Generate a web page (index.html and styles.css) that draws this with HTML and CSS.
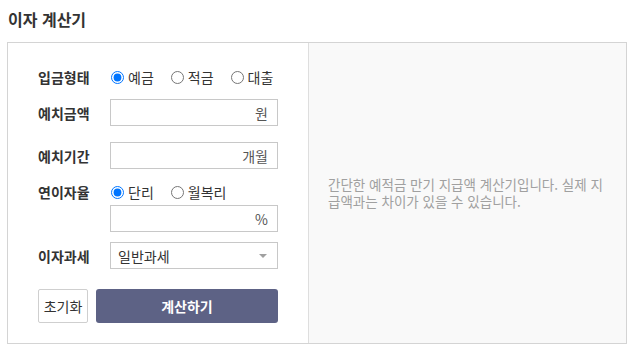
FILE: index.html
```html
<!DOCTYPE html>
<html lang="ko">
<head>
<meta charset="utf-8">
<title>이자 계산기</title>
<link rel="stylesheet" href="styles.css">
</head>
<body>
<div class="page">
  <h1 class="title">이자 계산기</h1>
  <div class="calc">
    <div class="form">
      <div class="row row-radio">
        <span class="label">입금형태</span>
        <label class="opt"><input type="radio" name="type" checked>예금</label>
        <label class="opt"><input type="radio" name="type">적금</label>
        <label class="opt"><input type="radio" name="type">대출</label>
      </div>
      <div class="row row-field gap-12">
        <span class="label">예치금액</span>
        <div class="field"><input type="text" class="field-input"><span class="unit">원</span></div>
      </div>
      <div class="row row-field gap-16">
        <span class="label">예치기간</span>
        <div class="field"><input type="text" class="field-input"><span class="unit">개월</span></div>
      </div>
      <div class="row row-radio gap-13">
        <span class="label">연이자율</span>
        <label class="opt"><input type="radio" name="rate" checked>단리</label>
        <label class="opt"><input type="radio" name="rate">월복리</label>
      </div>
      <div class="row row-field gap-3">
        <span class="label"></span>
        <div class="field"><input type="text" class="field-input"><span class="unit">%</span></div>
      </div>
      <div class="row row-field gap-10">
        <span class="label">이자과세</span>
        <div class="field select-wrap">
          <select class="select">
            <option>일반과세</option>
            <option>비과세</option>
            <option>세금우대</option>
          </select>
          <svg class="arrow" width="8" height="4" viewBox="0 0 8 4"><polygon points="0,0 8,0 4,4" fill="#a0a0a0"/></svg>
        </div>
      </div>
      <div class="row buttons gap-20">
        <button class="btn-reset">초기화</button>
        <button class="btn-calc">계산하기</button>
      </div>
    </div>
    <div class="result">
      <p class="desc">간단한 예적금 만기 지급액 계산기입니다. 실제 지급액과는 차이가 있을 수 있습니다.</p>
    </div>
  </div>
</div>
</body>
</html>
```
FILE: styles.css
```css
* { box-sizing: border-box; }
html, body { margin: 0; padding: 0; background: #fff; }
body {
  font-family: "Noto Sans CJK KR", "Noto Sans", sans-serif;
  color: #333;
}
.page { padding: 0 12px 0 7px; }
.title {
  margin: 0 0 13px 0;
  padding: 9px 0 0 1px;
  font-size: 16px;
  line-height: 20px;
  font-weight: 700;
  color: #333;
}
.calc {
  display: flex;
  width: 620px;
  height: 302px;
  border: 1px solid #d4d4d4;
}
.form {
  width: 301px;
  flex: none;
  border-right: 1px solid #dedede;
  padding: 24px 30px 20px 30px;
  display: flex;
  flex-direction: column;
}
.row { display: flex; align-items: center; }
.row-radio { height: 20px; }
.row-field { height: 27px; }
.gap-3 { margin-top: 3px; }
.gap-10 { margin-top: 10px; }
.gap-12 { margin-top: 12px; }
.gap-13 { margin-top: 13px; }
.gap-16 { margin-top: 16px; }
.gap-20 { margin-top: 20px; }
.label {
  width: 72px;
  flex: none;
  font-size: 14px;
  font-weight: 700;
  color: #333;
  white-space: nowrap;
}
.opt {
  display: flex;
  flex: none;
  align-items: center;
  font-size: 14px;
  color: #333;
  margin-right: 16px;
  white-space: nowrap;
}
.opt input {
  width: 13px;
  height: 13px;
  margin: 0 4px 0 1px;
}
.field {
  width: 168px;
  flex: none;
  height: 27px;
  border: 1px solid #c8c8c8;
  display: flex;
  align-items: center;
  background: #fff;
}
.field-input {
  flex: 1;
  min-width: 0;
  height: 100%;
  border: none;
  outline: none;
  background: transparent;
  text-align: right;
  font: inherit;
  font-size: 14px;
}
.unit {
  font-size: 14px;
  color: #555;
  padding: 0 9px 0 2px;
  white-space: nowrap;
}
.select-wrap { padding-right: 10px; }
.select {
  flex: 1;
  height: 100%;
  border: none;
  outline: none;
  background: transparent;
  appearance: none;
  -webkit-appearance: none;
  font-family: inherit;
  font-size: 14px;
  color: #333;
  padding: 0 0 0 7px;
}
.arrow { flex: none; }
.buttons { height: 34px; }
.btn-reset {
  width: 50px;
  flex: none;
  height: 34px;
  margin-right: 8px;
  border: 1px solid #cfcfcf;
  background: #fff;
  font-family: inherit;
  font-size: 14px;
  color: #333;
  padding: 0;
  border-radius: 2px;
}
.btn-calc {
  flex: 1;
  height: 34px;
  border: none;
  border-radius: 3px;
  background: #5d6285;
  color: #fff;
  font-family: inherit;
  font-size: 14px;
  font-weight: 700;
  padding: 0;
}
.result {
  flex: 1;
  background: #f9f9f9;
  display: flex;
  align-items: center;
  padding: 0 21px 0 19px;
}
.desc {
  margin: 0;
  font-size: 13.5px;
  line-height: 17px;
  color: #a0a0a0;
}
```
